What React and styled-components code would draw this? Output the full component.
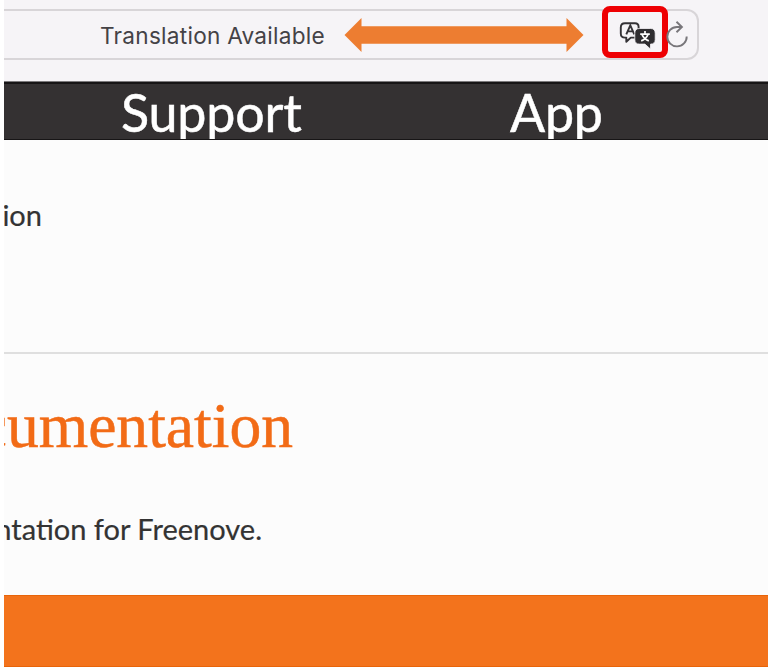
import React from "react";
import styled, { createGlobalStyle } from "styled-components";

const GlobalStyle = createGlobalStyle`
  * { box-sizing: border-box; }
  body { margin: 0; background: #fff; }
`;

const Frame = styled.main`
  width: 764px;
  height: 667px;
  margin-left: 4px;
  overflow: hidden;
  display: flex;
  flex-direction: column;
  background: #fcfcfc;
`;

const Toolbar = styled.header`
  height: 82px;
  flex: none;
  padding-top: 9px;
  background: #f6f4f7;
  border-bottom: 1px solid #7c7a7c;
`;

const AddressBar = styled.div`
  width: 696px;
  height: 51px;
  margin-left: -1px;
  display: flex;
  align-items: center;
  border: 2px solid #d8d5d8;
  border-left: 0;
  border-radius: 0 12px 12px 0;
`;

const Status = styled.span`
  width: 225px;
  margin-left: 97px;
  padding-top: 2px;
  white-space: nowrap;
  font: 400 22.6px/30px Inter, sans-serif;
  letter-spacing: 0.26px;
  color: #444246;
`;

const Arrow = styled.svg`
  flex: none;
  width: 240px;
  height: 34px;
  margin-left: 19px;
`;

const Highlight = styled.div`
  flex: none;
  width: 66px;
  height: 52px;
  margin: -6px 0 0 18px;
  padding: 9px 0 0 10px;
  border: 6px solid #ee0003;
  border-radius: 8px;
`;

const TranslateIcon = styled.svg`
  display: block;
  width: 38px;
  height: 30px;
`;

const ReloadIcon = styled.svg`
  flex: none;
  width: 24px;
  height: 30px;
  margin: 3px 0 0 -2px;
`;

const Navigation = styled.nav`
  height: 58px;
  flex: none;
  display: flex;
  overflow: hidden;
  background: #343132;
  border-top: 2px solid #171516;
  border-bottom: 1px solid #171516;
`;

const NavItem = styled.a`
  flex: none;
  width: ${({ $width }) => $width}px;
  padding-left: ${({ $inset }) => $inset}px;
  font: 400 52px/57px Lato, sans-serif;
  letter-spacing: -0.2px;
  -webkit-text-stroke: 0.5px #fff;
  color: #fff;
`;

const Breadcrumb = styled.section`
  height: 214px;
  flex: none;
  padding-top: 57px;
  border-bottom: 2px solid #dfdfdf;
`;

const EndText = styled.p`
  width: ${({ $end }) => $end}px;
  margin: 0;
  display: flex;
  justify-content: flex-end;
  white-space: nowrap;
  font: 400 29px/36px Lato, sans-serif;
  -webkit-text-stroke: 0.2px #333;
  color: #333;
`;

const Article = styled.section`
  height: 241px;
  flex: none;
  padding-top: 37px;
`;

const Title = styled.h1`
  width: 289px;
  height: 70px;
  margin: 0 0 50px;
  display: flex;
  justify-content: flex-end;
  white-space: nowrap;
  font: 400 63.6px/70px "Liberation Serif", serif;
  -webkit-text-stroke: 0.5px #f26b16;
  color: #f26b16;
`;

const Banner = styled.footer`
  height: 72px;
  flex: none;
  background: #f3731c;
  border-top: 1px solid #e86409;
  border-bottom: 1px solid #e86409;
`;

export default function App() {
  return (
    <>
      <GlobalStyle />
      <Frame>
        <Toolbar>
          <AddressBar>
            <Status>Translation Available</Status>
            <Arrow viewBox="0 0 240 34" aria-hidden="true">
              <path d="M.5 17 17.5 0v8.2h205V0l17 17-17 17v-8.3h-205V34Z" fill="#ed7d31" />
            </Arrow>
            <Highlight>
              <TranslateIcon viewBox="0 0 38 30" fill="none" aria-label="Translate">
                <path d="M7 2.3h10q3.6 0 3.6 3.6v7.9q0 2.8-3.6 2.8h-4.2L8.3 20.8v-4.2H7q-4.2 0-4.2-4.2V6.5q0-4.2 4.2-4.2Z" stroke="#343236" strokeWidth="1.9" strokeLinejoin="round" />
                <path d="m8.3 13.4 4-9 4 9M9.7 10.4h5.2" stroke="#343236" strokeWidth="1.9" />
                <path d="M21.5 7.5h11q4.7 0 4.7 4.7v6.2q0 4.7-4.7 4.7v5l-5.6-5h-5.4q-4.7 0-4.7-4.7v-6.2q0-4.7 4.7-4.7Z" fill="#2f2d30" stroke="#f6f4f7" strokeWidth=".8" />
                <path d="M27 10v3M22.2 13.2h9.6M24 13.5c1.2 3.1 3.3 5 6.8 6.4M30 13.5c-1.2 3.1-3.3 5-6.8 6.4" stroke="#fff" strokeWidth="1.7" />
              </TranslateIcon>
            </Highlight>
            <ReloadIcon viewBox="0 0 24 30" fill="none" aria-label="Reload">
              <path d="M15.5 6H11A9.7 9.7 0 1 0 20.7 15.5M10.5.8l5.4 5.2-5.4 5.2" stroke="#78767a" strokeWidth="1.9" />
            </ReloadIcon>
          </AddressBar>
        </Toolbar>
        <Navigation>
          <NavItem $width={388} $inset={117}>Support</NavItem>
          <NavItem $width={376} $inset={118}>App</NavItem>
        </Navigation>
        <Breadcrumb>
          <EndText $end={38}>ion</EndText>
        </Breadcrumb>
        <Article>
          <Title>cumentation</Title>
          <EndText $end={258}>ntation for Freenove.</EndText>
        </Article>
        <Banner />
      </Frame>
    </>
  );
}
